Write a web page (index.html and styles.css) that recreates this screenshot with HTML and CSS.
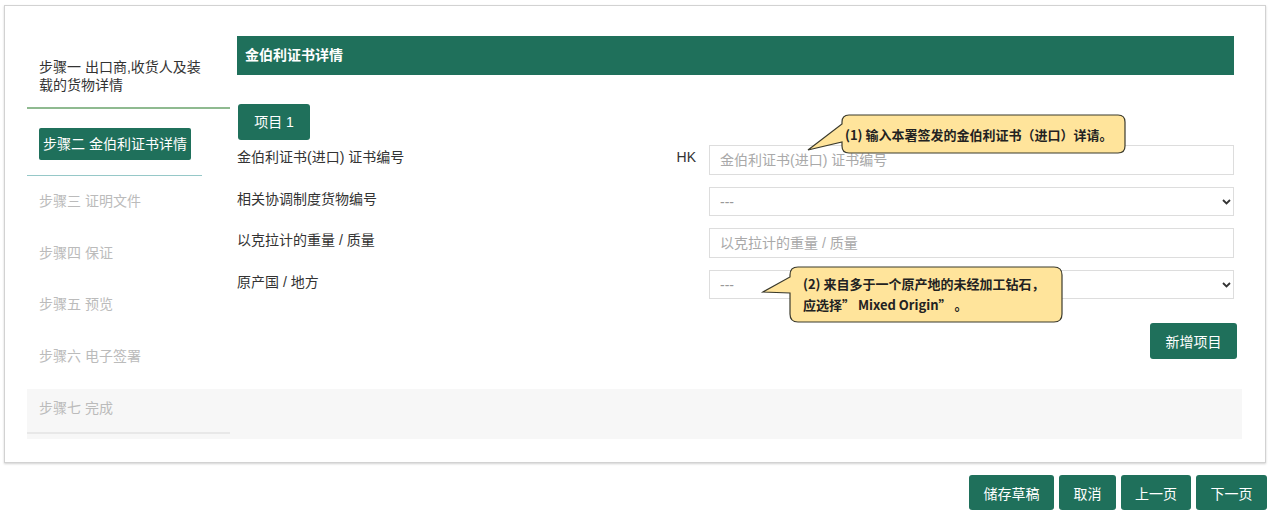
FILE: index.html
```html
<!DOCTYPE html>
<html lang="zh-CN">
<head>
    <meta charset="UTF-8">
    <meta name="viewport" content="width=device-width, initial-scale=1.0">
    <title>金伯利证书详情</title>
    <link rel="stylesheet" href="styles.css">
</head>
<body>
    <div class="page">

        <div class="card">
            <div class="card-top">
                <ul class="steps">
                    <li class="step step-done">步骤一 出口商,收货人及装载的货物详情</li>
                    <li class="step step-current"><span class="step-badge">步骤二 金伯利证书详情</span></li>
                    <li class="step step-todo">步骤三 证明文件</li>
                    <li class="step step-todo">步骤四 保证</li>
                    <li class="step step-todo">步骤五 预览</li>
                    <li class="step step-todo">步骤六 电子签署</li>
                </ul>

                <div class="main">
                    <h2 class="section-title">金伯利证书详情</h2>
                    <div class="item-tab">项目 1</div>

                    <form class="form" action="" method="get">
                        <div class="form-row">
                            <label for="certNo" class="form-label">金伯利证书(进口) 证书编号</label>
                            <span class="prefix">HK</span>
                            <input type="text" id="certNo" class="int-text" placeholder="金伯利证书(进口) 证书编号">
                        </div>
                        <div class="form-row">
                            <label for="hsCode" class="form-label">相关协调制度货物编号</label>
                            <span class="prefix"></span>
                            <div class="select-wrap">
                                <select id="hsCode" class="int-select"><option>---</option></select>
                                <svg class="chevron" width="9" height="6" viewBox="0 0 9 6"><path d="M1 1 L4.5 4.5 L8 1" fill="none" stroke="#333" stroke-width="1.8"/></svg>
                            </div>
                        </div>
                        <div class="form-row">
                            <label for="weight" class="form-label">以克拉计的重量 / 质量</label>
                            <span class="prefix"></span>
                            <input type="text" id="weight" class="int-text" placeholder="以克拉计的重量 / 质量">
                        </div>
                        <div class="form-row">
                            <label for="origin" class="form-label">原产国 / 地方</label>
                            <span class="prefix"></span>
                            <div class="select-wrap">
                                <select id="origin" class="int-select"><option>---</option></select>
                                <svg class="chevron" width="9" height="6" viewBox="0 0 9 6"><path d="M1 1 L4.5 4.5 L8 1" fill="none" stroke="#333" stroke-width="1.8"/></svg>
                            </div>
                        </div>
                        <div class="form-actions">
                            <button type="button" class="btn btn-add">新增项目</button>
                        </div>
                    </form>
                </div>
            </div>

            <div class="band">
                <div class="step step-todo step-last">步骤七 完成</div>
            </div>
        </div>

        <div class="footer">
            <button type="button" class="btn">储存草稿</button>
            <button type="button" class="btn">取消</button>
            <button type="button" class="btn">上一页</button>
            <button type="button" class="btn">下一页</button>
        </div>

        <!-- callouts over the form -->
        <div class="callout callout-one">
            <svg class="callout-shape" width="330" height="48" viewBox="0 0 330 48">
                <path d="M49 5 H318 Q325 5 325 12 V36 Q325 43 318 43 H49 Q42 43 42 36 V32 L8 40 L42 14 V12 Q42 5 49 5 Z" fill="#ffe49b" stroke="#3b3a2c" stroke-width="1.2"/>
            </svg>
            <p class="callout-text">(1) 输入本署签发的金伯利证书（进口）详请。</p>
        </div>
        <div class="callout callout-two">
            <svg class="callout-shape" width="312" height="64" viewBox="0 0 312 64">
                <path d="M43 5 H299 Q307 5 307 13 V52 Q307 60 299 60 H43 Q35 60 35 52 V31 L8 30 L35 15 V13 Q35 5 43 5 Z" fill="#ffe49b" stroke="#3b3a2c" stroke-width="1.2"/>
            </svg>
            <p class="callout-text">(2) 来自多于一个原产地的未经加工钻石，<br>应选择” Mixed Origin” 。</p>
        </div>

    </div>
</body>
</html>
```

FILE: styles.css
```css
:root {
    --green: #1f705b;
    --text: #333;
    --muted: #bbb;
    --line: #ddd;
}

body {
    margin: 0;
    padding: 0;
    background: #fff;
    color: var(--text);
    font-family: 'Liberation Sans', 'Noto Sans CJK SC', sans-serif;
    font-size: 14px;
}

.page {
    position: relative;
    width: 1272px;
}

.card {
    margin: 5px 0 0 4px;
    width: 1262px;
    height: 458px;
    box-sizing: border-box;
    border: 1px solid #d2d2d2;
    box-shadow: 0 1px 2px rgba(0, 0, 0, 0.18);
    padding: 30px 23px 0 22px;
}

.card-top {
    display: flex;
    height: 353px;
}

/* steps column */

.steps {
    list-style: none;
    margin: 0;
    padding: 0;
    width: 203px;
    flex-shrink: 0;
}

.step {
    padding-left: 12px;
    line-height: 18px;
}

.step-done {
    padding: 22px 18px 13px 12px;
    border-bottom: 2px solid #8fba90;
}

.step-current {
    padding: 19px 0 15px 12px;
    width: 163px;
    border-bottom: 1px solid #96c8c8;
}

.step-badge {
    display: inline-block;
    background: var(--green);
    color: #fff;
    height: 32px;
    line-height: 32px;
    padding: 0 4px;
    border-radius: 2px;
}

.step-todo {
    color: var(--muted);
    height: 51.5px;
    line-height: 51.5px;
}

.band {
    height: 50px;
    background: #f7f7f7;
}

.step-last {
    width: 191px;
    height: 38px;
    line-height: 38px;
    padding-bottom: 5px;
    border-bottom: 2px solid #e8e8e8;
}

/* main column */

.main {
    margin-left: 7px;
    width: 997px;
}

.section-title {
    margin: 0;
    height: 39px;
    line-height: 39px;
    padding-left: 8px;
    background: var(--green);
    color: #fff;
    font-size: 14px;
    font-weight: bold;
}

.item-tab {
    margin: 29px 0 0 1px;
    width: 72px;
    height: 36px;
    line-height: 36px;
    text-align: center;
    background: var(--green);
    color: #fff;
    border-radius: 3px;
}

.form {
    margin-top: 5px;
    display: flex;
    flex-direction: column;
    gap: 12px;
}

.form-row {
    display: grid;
    grid-template-columns: 1fr auto 525px;
    align-items: start;
}

.form-label {
    line-height: 24px;
}

.prefix {
    line-height: 24px;
    padding-right: 13px;
}

.int-text,
.int-select {
    box-sizing: border-box;
    width: 525px;
    border: 1px solid var(--line);
    background: #fff;
    font: inherit;
    color: var(--text);
    padding: 0 10px;
    margin: 0;
    outline: none;
}

.int-text {
    height: 30px;
}

.int-text::placeholder {
    color: #a9a9a9;
}

.select-wrap {
    position: relative;
}

.int-select {
    display: block;
    height: 29px;
    color: #999;
    appearance: none;
    -webkit-appearance: none;
}

.chevron {
    position: absolute;
    right: 3px;
    top: 12px;
}

.form-actions {
    display: flex;
    justify-content: flex-end;
    margin: 12px -3px 0 0;
}

.btn {
    height: 35px;
    padding: 0 14px;
    border: none;
    border-radius: 3px;
    background: var(--green);
    color: #fff;
    font: inherit;
}

.btn-add {
    height: 36px;
    width: 87px;
    padding: 0;
}

.footer {
    display: flex;
    justify-content: flex-end;
    gap: 5px;
    margin-top: 12px;
    padding-right: 5px;
}

.footer .btn:nth-child(1) { width: 85px; }
.footer .btn:nth-child(2) { width: 57px; }
.footer .btn:nth-child(3) { width: 70px; }
.footer .btn:nth-child(4) { width: 71px; }

/* callouts */

.callout {
    position: absolute;
}

.callout-shape {
    position: absolute;
    left: 0;
    top: 0;
}

.callout-text {
    position: relative;
    margin: 0;
    font-family: 'Noto Sans CJK SC', sans-serif;
    font-weight: bold;
    font-size: 13px;
    color: #222;
    white-space: nowrap;
}

.callout-one {
    left: 800px;
    top: 105px;
    width: 330px;
    height: 48px;
}

.callout-one .callout-text {
    padding: 15px 0 0 45px;
    line-height: 20px;
}

.callout-two {
    left: 755px;
    top: 257px;
    width: 312px;
    height: 64px;
}

.callout-two .callout-text {
    padding: 11px 0 0 48px;
    line-height: 21px;
}
```
